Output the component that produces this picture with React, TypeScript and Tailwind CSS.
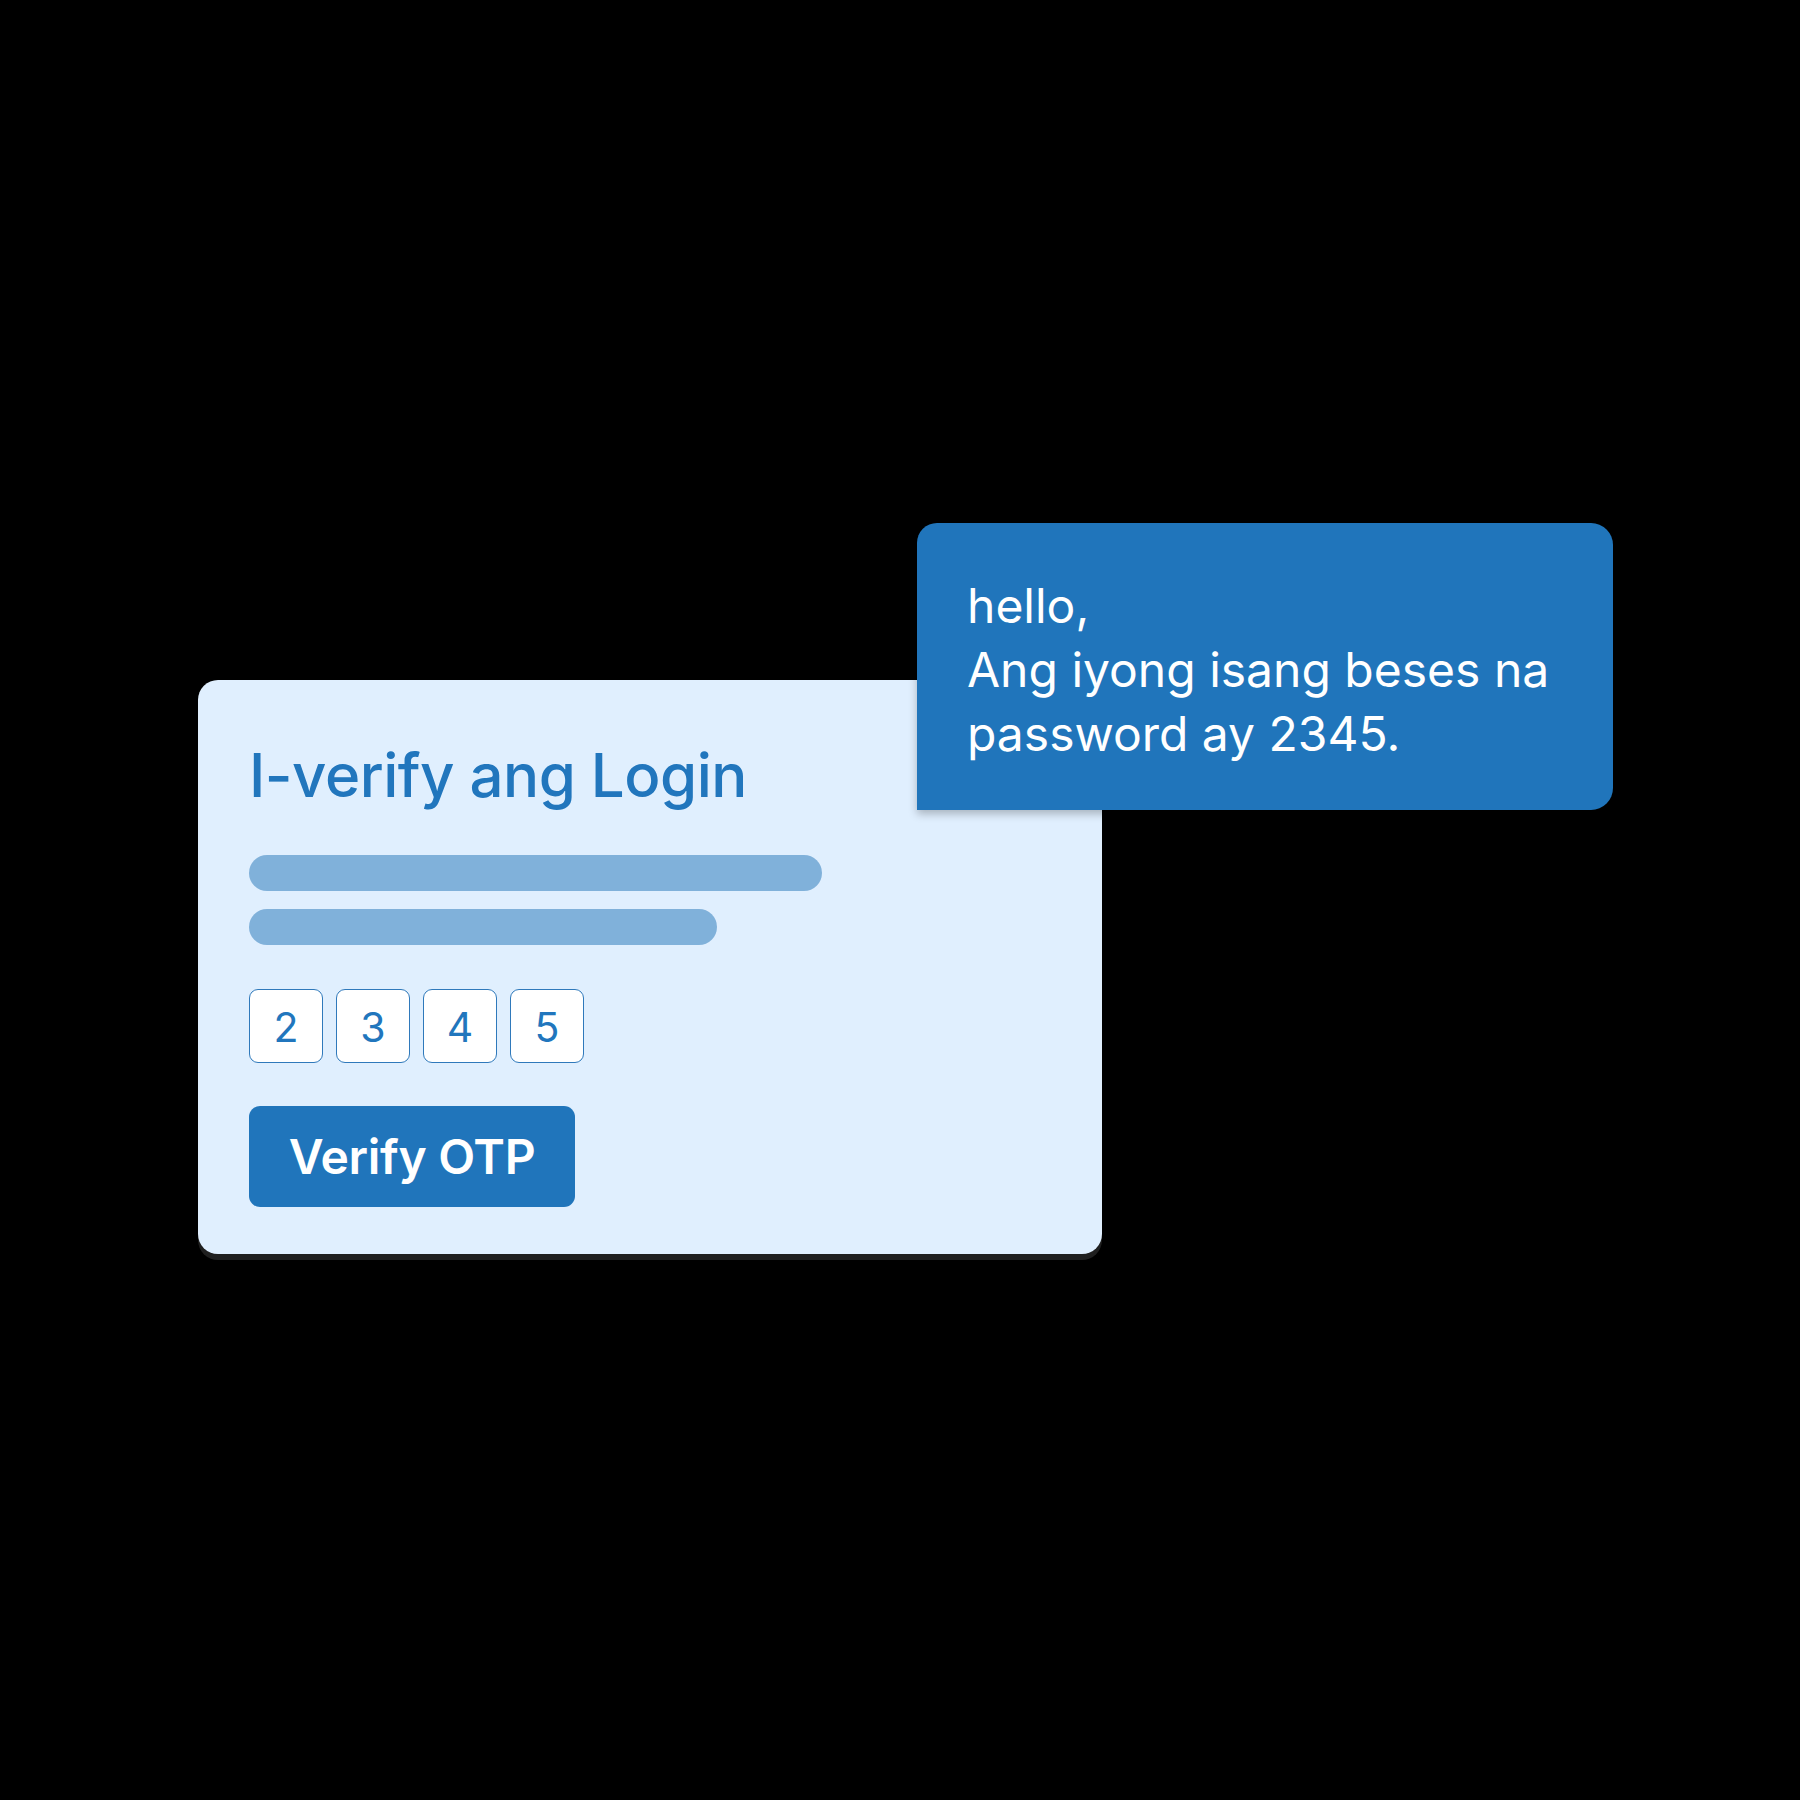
import React from 'react';

const digits = ['2', '3', '4', '5'];

const App = () => {
  return (
    <div className="w-[1800px] h-[1800px] bg-black pt-[680px] pl-[198px] font-['Inter',sans-serif]">
      <div className="relative w-[904px] h-[574px] rounded-[20px] bg-[#e0effe] pt-[65px] pl-[51px] shadow-[0_6px_0_rgba(255,255,255,0.12)]">
        <h1 className="text-[60px] leading-none font-medium text-[#2176bd] tracking-[-0.5px]">I-verify ang Login</h1>

        {/* placeholder lines */}
        <div className="mt-[50px] flex flex-col gap-[18px]">
          <div className="w-[573px] h-[36px] rounded-full bg-[#80b1da]" />
          <div className="w-[468px] h-[36px] rounded-full bg-[#80b1da]" />
        </div>

        <div className="mt-[44px] flex gap-[13px]">
          {digits.map((d) => (
            <div key={d} className="w-[74px] h-[74px] rounded-[9px] border border-[#2f79bb] bg-white flex items-center justify-center pt-[4px] text-[41px] text-[#2176bd]">
              {d}
            </div>
          ))}
        </div>

        <button className="mt-[43px] w-[326px] h-[101px] rounded-[11px] bg-[#2075bb] text-white text-[48px] font-semibold flex items-center justify-center tracking-[-0.3px]">
          Verify OTP
        </button>

        {/* SMS bubble */}
        <div className="absolute left-[719px] top-[-157px] w-[696px] h-[287px] bg-[#2075bb] rounded-tl-[20px] rounded-tr-[22px] rounded-br-[22px] pt-[51px] pl-[50px] shadow-[0_4px_8px_rgba(0,0,0,0.25)]">
          <p className="text-[48px] leading-[64px] text-white">
            hello,
            <br />
            Ang iyong isang beses na
            <br />
            password ay 2345.
          </p>
        </div>
      </div>
    </div>
  );
};

export default App;
